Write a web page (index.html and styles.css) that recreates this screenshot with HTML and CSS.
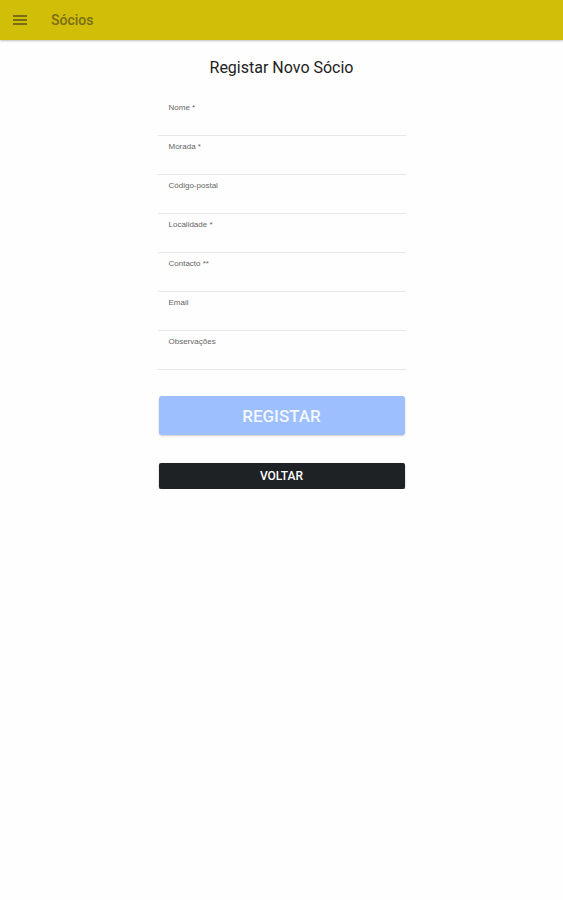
FILE: index.html
```html
<!DOCTYPE html>
<html lang="pt">
<head>
<meta charset="UTF-8">
<meta name="viewport" content="width=device-width, initial-scale=1">
<title>Sócios</title>

	<link rel="stylesheet" href="styles.css">

</head>
<body>

	<header class="toolbar">
		<button type="button" class="menu" aria-label="Menu">
			<svg width="14" height="10" viewBox="0 0 14 10">
				<path d="M0 1h14M0 5h14M0 9h14" stroke="currentColor" stroke-width="2"/>
			</svg>
		</button>
		<div class="title">Sócios</div>
	</header>

	<main class="content">
		<h1>Registar Novo Sócio</h1>
		<form>
			<div class="item">
				<label for="nome">Nome *</label>
				<input type="text" id="nome">
			</div>
			<div class="item">
				<label for="morada">Morada *</label>
				<input type="text" id="morada">
			</div>
			<div class="item">
				<label for="codigo">Código-postal</label>
				<input type="text" id="codigo">
			</div>
			<div class="item">
				<label for="localidade">Localidade *</label>
				<input type="text" id="localidade">
			</div>
			<div class="item">
				<label for="contacto">Contacto **</label>
				<input type="tel" id="contacto">
			</div>
			<div class="item">
				<label for="email">Email</label>
				<input type="email" id="email">
			</div>
			<div class="item">
				<label for="obs">Observações</label>
				<input type="text" id="obs">
			</div>
			<div class="buttons">
				<button type="submit" class="registar" disabled>REGISTAR</button>
				<button type="button" class="voltar">VOLTAR</button>
			</div>
		</form>
	</main>

</body>
</html>
```
FILE: styles.css
```css
*{
	box-sizing: border-box;
}
body{
	margin: 0;
	background-color: #fefefe;
	font-family: Roboto, "Liberation Sans", sans-serif;
}
button{
	border: 0;
	font-family: inherit;
	font-weight: 500;
}

/* toolbar */
.toolbar{
	display: flex;
	align-items: center;
	gap: 16px;
	height: 40px;
	padding: 0 5px;
	background-color: #d1be08;
	color: #7a6d14;
	box-shadow: 0 1px 2px rgba(0,0,0,0.25);
}
.menu{
	display: flex;
	padding: 8px;
	background: none;
	color: inherit;
}
.title{
	font-size: 14px;
	font-weight: 500;
}

/* form */
.content{
	width: 44%;
	min-width: 248px;
	margin: 0 auto;
	padding-top: 19px;
}
h1{
	margin: 0 0 20px;
	font-size: 16px;
	line-height: 18px;
	font-weight: normal;
	text-align: center;
	color: #222;
}
.item{
	display: flex;
	flex-direction: column;
	height: 39px;
	padding: 5px 11px 0;
	border-bottom: 1px solid #e8e8e8;
}
.item label{
	font-family: "Liberation Sans", Arial, sans-serif;
	font-size: 8px;
	line-height: 12px;
	color: #666;
}
.item input{
	width: 100%;
	height: 20px;
	padding: 0;
	border: 0;
	outline: none;
	background: none;
	font-size: 11px;
}

/* buttons */
.buttons{
	display: flex;
	flex-direction: column;
	gap: 28px;
	padding: 26px 1px 0;
}
.registar{
	height: 39px;
	border-radius: 3px;
	background-color: #9dbffe;
	color: #f3f7ff;
	font-size: 17px;
	box-shadow: 0 1px 2px rgba(0,0,0,0.2);
}
.voltar{
	height: 26px;
	border-radius: 2px;
	background-color: #1e2225;
	color: #fff;
	font-size: 12px;
	box-shadow: 0 1px 2px rgba(0,0,0,0.3);
}
```
